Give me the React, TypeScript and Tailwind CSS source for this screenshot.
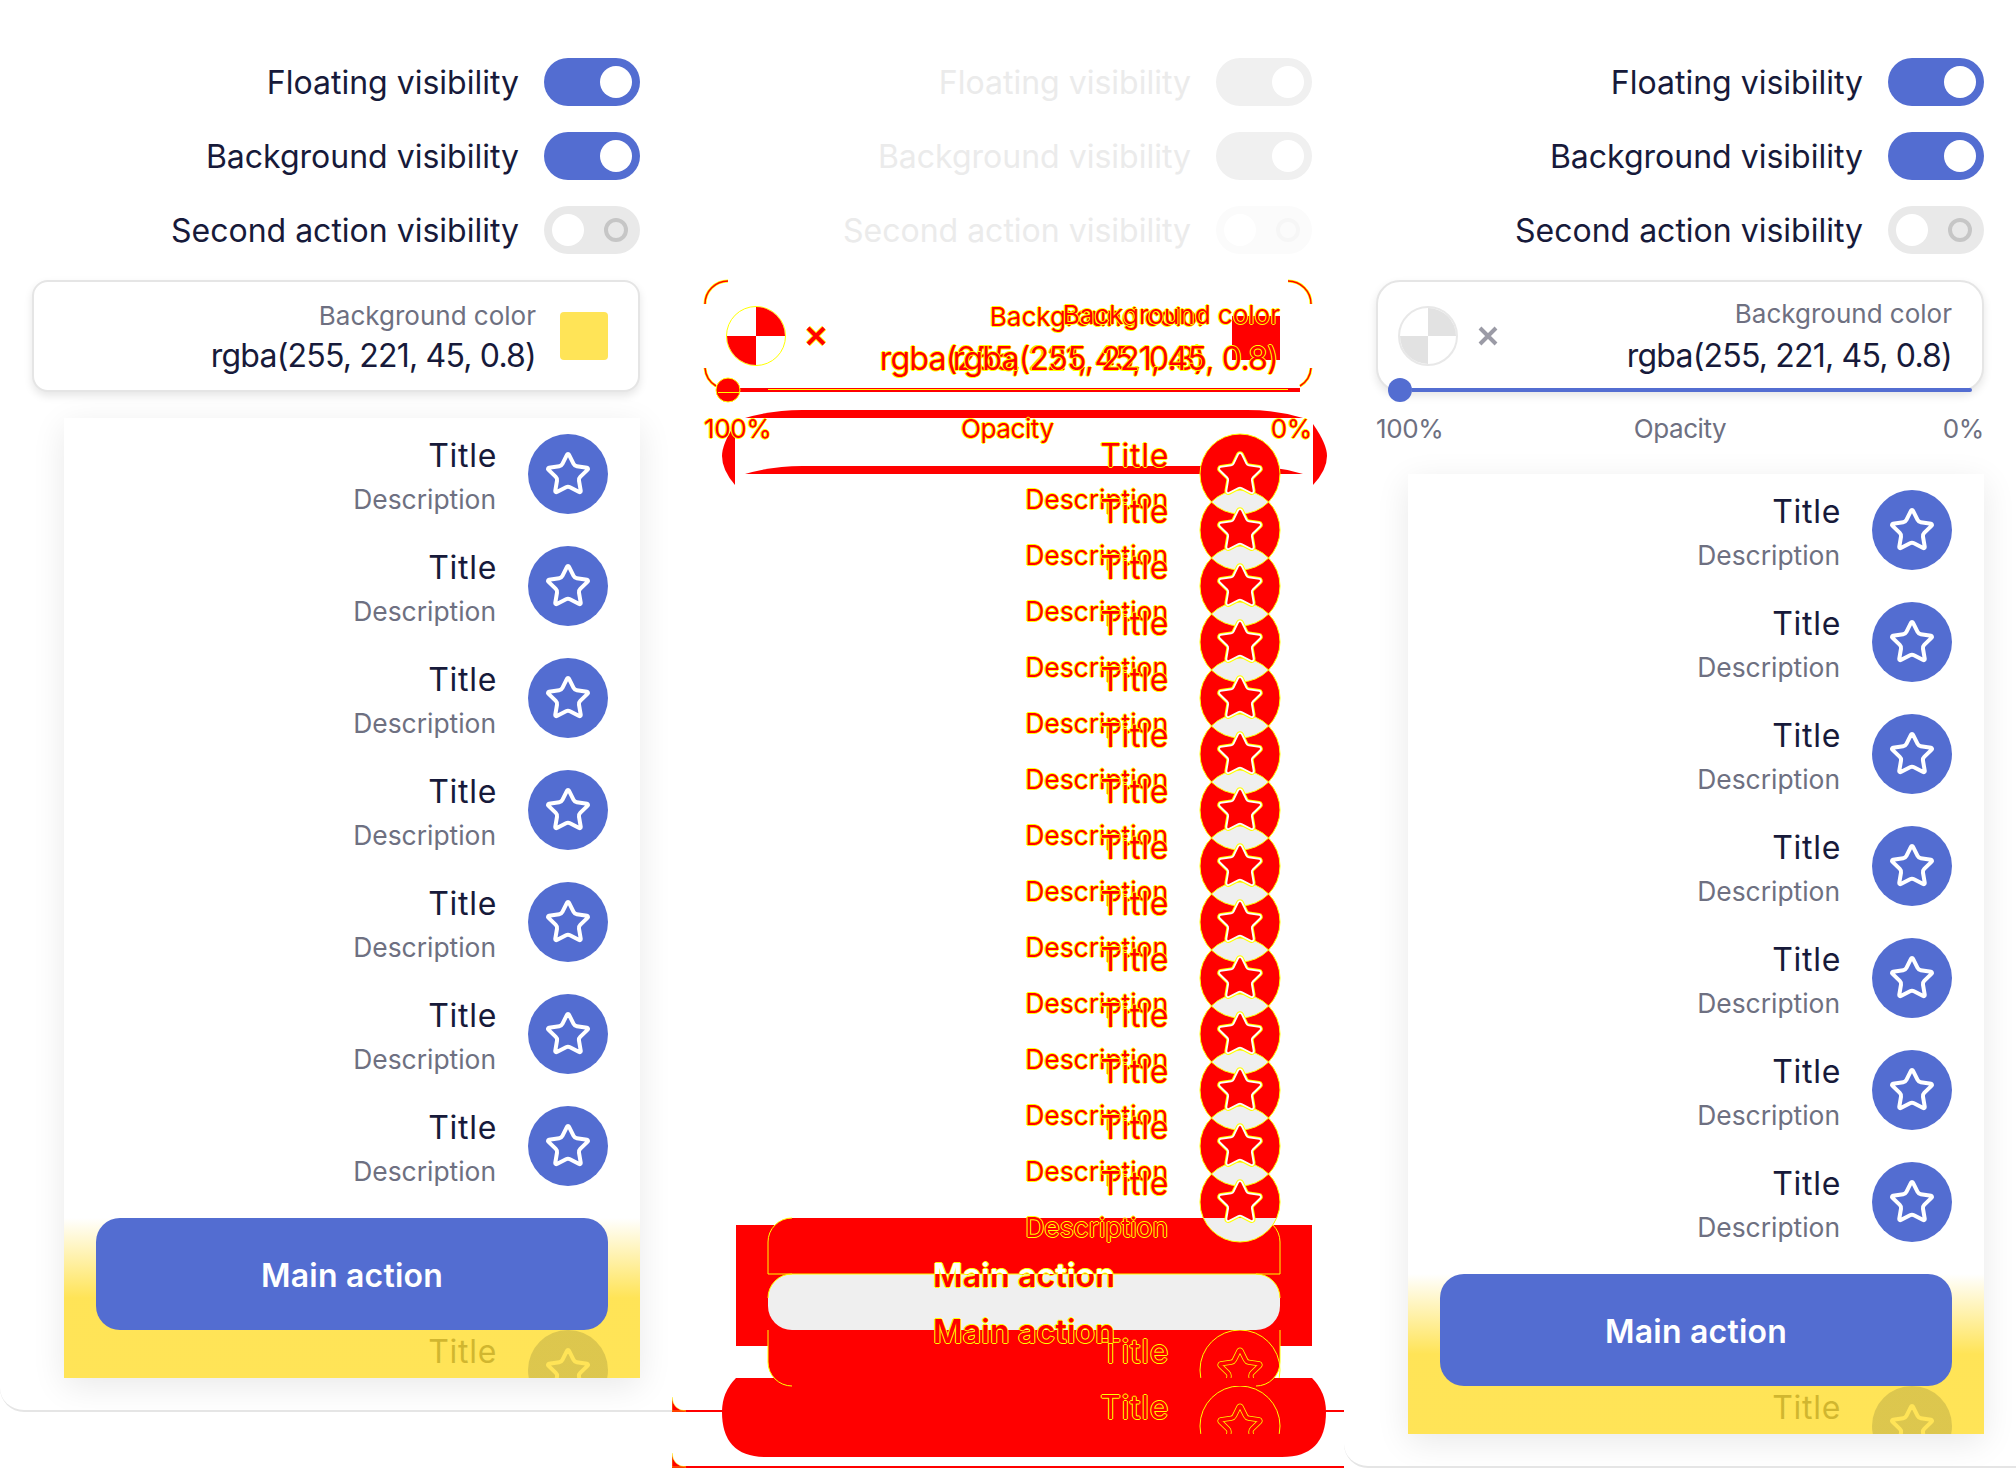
import { Star } from 'lucide-react'

const starPath =
  'M11.525 2.295a.53.53 0 0 1 .95 0l2.31 4.679a2.123 2.123 0 0 0 1.595 1.16l5.166.756a.53.53 0 0 1 .294.904l-3.736 3.638a2.123 2.123 0 0 0-.611 1.878l.882 5.14a.53.53 0 0 1-.771.56l-4.618-2.428a2.122 2.122 0 0 0-1.973 0L6.396 21.01a.53.53 0 0 1-.77-.56l.881-5.139a2.122 2.122 0 0 0-.611-1.879L2.16 9.795a.53.53 0 0 1 .294-.906l5.165-.755a2.122 2.122 0 0 0 1.597-1.16z'

const toggles = [
  { label: 'Floating visibility', on: true },
  { label: 'Background visibility', on: true },
  { label: 'Second action visibility', on: false },
]

const outline = '[text-shadow:1px_0_#ffff00,-1px_0_#ffff00,0_1px_#ffff00,0_-1px_#ffff00]'
const diffText = `absolute text-[#ff0000] whitespace-nowrap ${outline}`

function Toggle({ on, faint }: { on: boolean; faint?: boolean }) {
  const track = faint ? (on ? 'bg-[#f0f0f0]' : 'bg-[#fbfbfb]') : on ? 'bg-[#536dd1]' : 'bg-[#e9e9e9]'
  return (
    <div className={`relative w-24 h-12 rounded-full flex items-center ${on ? 'justify-end pr-2' : 'justify-between pl-2 pr-3'} ${track}`}>
      <div className="w-8 h-8 rounded-full bg-white" />
      {!on && <div className={`w-6 h-6 rounded-full border-4 ${faint ? 'border-[#f6f6f6]' : 'border-[#c6c6c6]'}`} />}
    </div>
  )
}

function ToggleList({ faint }: { faint?: boolean }) {
  return (
    <div className="flex flex-col gap-[26px]">
      {toggles.map((t) => (
        <div key={t.label} className="flex items-center justify-end gap-[25px] h-12">
          <span className={`text-[32px] pt-[2px] ${faint ? 'text-[#ebebeb]' : 'text-[#171a3a]'}`}>{t.label}</span>
          <Toggle on={t.on} faint={faint} />
        </div>
      ))}
    </div>
  )
}

function ColorText({ lifted }: { lifted?: boolean }) {
  return (
    <div className="flex flex-col items-end pt-1">
      <span className={`text-[26px] leading-[36px] text-[#6e7081] ${lifted ? '-mt-[2px] pb-[2px]' : ''}`}>Background color</span>
      <span className="text-[32px] leading-[44px] tracking-[-0.8px] text-[#171a3a]">rgba(255, 221, 45, 0.8)</span>
    </div>
  )
}

function ListRow() {
  return (
    <div className="flex items-start justify-end gap-8 h-20 shrink-0">
      <div className="flex flex-col items-end h-20">
        <span className="text-[32px] leading-[44px] tracking-[0.7px] -mr-px text-[#171a3a]">Title</span>
        <span className="text-[26.4px] leading-[42px] text-[#6e7081]">Description</span>
      </div>
      <div className="w-20 h-20 rounded-full bg-[#536dd1] flex items-center justify-center">
        <Star size={48} className="text-white" strokeWidth={2} />
      </div>
    </div>
  )
}

function Panel({ className }: { className: string }) {
  return (
    <div className={`relative ml-8 h-[960px] bg-white overflow-hidden shadow-[0_8px_32px_rgba(0,0,0,0.09)] ${className}`}>
      <div className="flex flex-col gap-8 pt-4 pr-8">
        {Array.from({ length: 9 }).map((_, i) => (
          <ListRow key={i} />
        ))}
      </div>
      <div className="absolute inset-x-0 bottom-0 px-8 pb-12 bg-[linear-gradient(to_bottom,rgba(255,221,45,0)_0%,rgba(255,221,45,0.8)_50%)]">
        <button className="w-full h-28 pt-1 rounded-3xl bg-[#536dd1] text-white text-[32px] font-semibold tracking-[0.2px]">Main action</button>
      </div>
    </div>
  )
}

function ResetIcon() {
  return (
    <svg width="60" height="60" viewBox="0 0 60 60">
      <circle cx="30" cy="30" r="29" fill="#fff" stroke="#e8e8e8" strokeWidth="2" />
      <path d="M30 2a28 28 0 0 1 28 28H30z" fill="#e2e2e2" />
      <path d="M30 58a28 28 0 0 1-28-28h28z" fill="#e2e2e2" />
    </svg>
  )
}

function LeftColumn() {
  return (
    <div className="w-[672px] h-[1412px] shrink-0 bg-white overflow-hidden rounded-bl-3xl border-b-2 border-[#e5e5e5] pt-[58px] pl-8 pr-8">
      <ToggleList />
      <div className="mt-[26px] h-[112px] rounded-2xl border-2 border-[#e5e5e5] bg-white shadow-[0_4px_8px_rgba(0,0,0,0.1)] flex items-center justify-end gap-6 pr-[30px]">
        <ColorText />
        <div className="w-12 h-12 rounded bg-[#ffe457]" />
      </div>
      <Panel className="mt-[26px]" />
    </div>
  )
}

function RightColumn() {
  return (
    <div className="w-[672px] h-[1468px] shrink-0 bg-white overflow-hidden rounded-bl-3xl border-b-2 border-[#e5e5e5] pt-[58px] pl-8 pr-8">
      <ToggleList />
      <div className="relative mt-[26px] h-[112px] rounded-3xl border-2 border-[#e5e5e5] bg-white shadow-[0_4px_8px_rgba(0,0,0,0.1)] flex items-center pl-[20px] pr-[30px]">
        <ResetIcon />
        <svg width="20" height="20" viewBox="0 0 20 20" className="ml-5">
          <path d="M2 2l16 16M18 2L2 18" stroke="#9b9ba6" strokeWidth="4" />
        </svg>
        <div className="ml-auto">
          <ColorText lifted />
        </div>
        {/* opacity slider sits on the card's bottom edge */}
        <div className="absolute left-[10px] right-[10px] -bottom-3 h-6 flex items-center">
          <div className="w-6 h-6 rounded-full bg-[#536dd1] shrink-0" />
          <div className="flex-1 h-1 rounded-r-full bg-[#536dd1]" />
        </div>
      </div>
      <div className="mt-[18px] grid grid-cols-3 text-[26px] leading-[38px] tracking-[-0.4px] text-[#6e7081]">
        <span>100%</span>
        <span className="text-center">Opacity</span>
        <span className="text-right">0%</span>
      </div>
      <Panel className="mt-[26px]" />
    </div>
  )
}

// top of each row in the overlaid diff: left layout and right layout alternate
const diffRows = Array.from({ length: 14 }).map((_, i) => 434 + i * 56)

function DiffStar({ y, hollow }: { y: number; hollow?: boolean }) {
  return (
    <g transform={`translate(544 ${y + 16}) scale(2)`} fill="none" strokeLinejoin="round">
      <path d={starPath} stroke="#ffff00" strokeWidth={hollow ? 2.6 : 2.8} />
      <path d={starPath} stroke={hollow ? '#ff0000' : '#ffffff'} strokeWidth={1.8} />
      {!hollow && <path d={starPath} fill="#ff0000" />}
    </g>
  )
}

function DiffCanvas() {
  return (
    <svg width="672" height="1468" viewBox="0 0 672 1468" className="absolute left-0 top-0">
      <defs>
        <clipPath id="band">
          <rect x="0" y="1218" width="672" height="160" />
        </clipPath>
        <clipPath id="lastA">
          <rect x="0" y="1330" width="672" height="48" />
        </clipPath>
        <clipPath id="lastB">
          <rect x="0" y="1386" width="672" height="48" />
        </clipPath>
        {diffRows.map((y) => (
          <clipPath id={`row-${y}`} key={y}>
            <circle cx="568" cy={y + 40} r="40" />
          </clipPath>
        ))}
      </defs>

      {/* shadow differences round the top of the panel */}
      <g fill="#ff0000">
        <path d="M73 418Q100 410 130 410H575Q605 410 631 418Z" />
        <path d="M73 474Q100 466 130 466H575Q605 466 631 474Z" />
        <path d="M63 424Q50 444 50 456Q50 470 63 485Z" />
        <path d="M641 424Q655 444 655 456Q655 470 641 485Z" />
      </g>

      {/* yellow footer and shadow below the panel */}
      <rect x="64" y="1225" width="576" height="121" fill="#ff0000" />
      <path d="M64 1378H640Q654 1392 654 1412Q654 1457 610 1457H94Q50 1457 50 1412Q50 1392 64 1378Z" fill="#ff0000" />
      <rect x="96" y="1218" width="512" height="168" rx="24" fill="#ff0000" />
      <rect x="96" y="1274" width="512" height="56" rx="24" fill="#efefef" />
      <path
        d="M96 1274V1242A24 24 0 0 1 120 1218M608 1274V1242A24 24 0 0 0 584 1218M96 1274H608M96 1330V1362A24 24 0 0 0 120 1386M608 1330V1362A24 24 0 0 1 584 1386M96 1298A24 24 0 0 1 120 1274M608 1298A24 24 0 0 0 584 1274"
        fill="none"
        stroke="#ffff00"
      />

      {/* box bottoms */}
      <path d="M0 1411H672M0 1467H672" stroke="#ff0000" strokeWidth="2" />
      <path d="M0 1397Q1 1410 14 1411H0Z" fill="#ff0000" stroke="#ffff00" strokeWidth="0.5" />
      <path d="M0 1453Q1 1466 14 1467H0Z" fill="#ff0000" stroke="#ffff00" strokeWidth="0.5" />

      {/* overlapping avatars: only the lens both layouts share stays grey */}
      {diffRows.map((y) => (
        <circle key={y} cx="568" cy={y + 40} r="40" fill="#ff0000" />
      ))}
      {diffRows.slice(1).map((y) => (
        <circle key={y} cx="568" cy={y + 40} r="40" fill="#efefef" clipPath={`url(#row-${y - 56})`} />
      ))}
      <circle cx="568" cy="1202" r="40" fill="#efefef" clipPath="url(#band)" />
      {diffRows.map((y) => (
        <circle key={y} cx="568" cy={y + 40} r="40" fill="none" stroke="#ffff00" />
      ))}
      {diffRows.map((y) => (
        <DiffStar key={y} y={y} />
      ))}

      {/* rows hidden by the footer */}
      <g clipPath="url(#lastA)">
        <circle cx="568" cy="1370" r="40" fill="none" stroke="#ffff00" />
        <DiffStar y={1330} hollow />
      </g>
      <g clipPath="url(#lastB)">
        <circle cx="568" cy="1426" r="40" fill="none" stroke="#ffff00" />
        <DiffStar y={1386} hollow />
      </g>

      {/* card corners */}
      <g fill="none">
        <path d="M33 304A23 23 0 0 1 56 281M639 304A23 23 0 0 0 616 281M33 368A23 23 0 0 0 44 386M639 368A23 23 0 0 1 628 386" stroke="#ffff00" strokeWidth="3" />
        <path d="M33 304A23 23 0 0 1 56 281M639 304A23 23 0 0 0 616 281M33 368A23 23 0 0 0 44 386M639 368A23 23 0 0 1 628 386" stroke="#ff0000" strokeWidth="1.5" />
      </g>

      {/* reset icon and its clear cross */}
      <circle cx="84" cy="336" r="29.5" fill="#fff" stroke="#ffff00" />
      <path d="M84 307a29 29 0 0 1 29 29H84zM84 365a29 29 0 0 1-29-29h29z" fill="#ff0000" />
      <path d="M136 328l16 16M152 328l-16 16" stroke="#ffff00" strokeWidth="6" />
      <path d="M136 328l16 16M152 328l-16 16" stroke="#ff0000" strokeWidth="4" />

      {/* colour swatch */}
      <rect x="560" y="316" width="48" height="44" fill="#ff0000" />

      {/* slider */}
      <rect x="68" y="388" width="560" height="4" fill="#ff0000" />
      <rect x="96" y="389" width="520" height="1" fill="#ffff00" />
      <circle cx="56" cy="390" r="12" fill="#ff0000" stroke="#ffff00" />
      <rect x="46" y="392" width="22" height="1" fill="#ffff00" />
    </svg>
  )
}

function MiddleColumn() {
  return (
    <div className="relative w-[672px] h-[1468px] shrink-0 bg-white overflow-hidden pt-[58px] pl-8 pr-8">
      <ToggleList faint />
      <DiffCanvas />

      <span className={`${diffText} right-[137px] top-[299px] text-[26px] leading-[36px]`}>Background color</span>
      <span className={`${diffText} right-[64px] top-[297px] text-[26px] leading-[36px]`}>Background color</span>
      <span className={`${diffText} right-[139px] top-[337px] text-[32px] leading-[44px] tracking-[-0.8px]`}>rgba(255, 221, 45, 0.8)</span>
      <span className={`${diffText} right-[66px] top-[337px] text-[32px] leading-[44px] tracking-[-0.8px]`}>rgba(255, 221, 45, 0.8)</span>

      <span className={`${diffText} left-8 top-[410px] text-[26px] leading-[38px] tracking-[-0.4px]`}>100%</span>
      <span className={`${diffText} left-[289px] top-[410px] text-[26px] leading-[38px] tracking-[-0.4px]`}>Opacity</span>
      <span className={`${diffText} right-8 top-[410px] text-[26px] leading-[38px] tracking-[-0.4px]`}>0%</span>

      {diffRows.map((y) => (
        <div key={y}>
          <span className={`${diffText} right-[175px] text-[32px] leading-[44px] tracking-[0.7px]`} style={{ top: y }}>
            Title
          </span>
          <span className={`${diffText} right-[176px] text-[26.4px] leading-[42px]`} style={{ top: y + 44 }}>
            Description
          </span>
        </div>
      ))}
      <span className={`${diffText} right-[175px] top-[1330px] text-[32px] leading-[44px] tracking-[0.7px]`}>Title</span>
      <span className={`${diffText} right-[175px] top-[1386px] text-[32px] leading-[44px] tracking-[0.7px]`}>Title</span>

      {/* first layout's label is white on the red half, red on the grey half */}
      <div className="absolute left-24 w-[512px] top-[1240px] h-[34px] overflow-hidden text-center">
        <span className={`text-white text-[32px] font-semibold tracking-[0.2px] leading-[72px] ${outline}`}>Main action</span>
      </div>
      <div className="absolute left-24 w-[512px] top-[1274px] h-9 overflow-hidden text-center">
        <span className={`block -mt-[34px] text-[#ff0000] text-[32px] font-semibold tracking-[0.2px] leading-[72px] ${outline}`}>Main action</span>
      </div>
      <div className="absolute left-24 w-[512px] top-[1296px] text-center">
        <span className={`text-[#ff0000] text-[32px] font-semibold tracking-[0.2px] leading-[72px] ${outline}`}>Main action</span>
      </div>
    </div>
  )
}

export default function App() {
  return (
    <div className="flex items-start w-[2016px] h-[1468px] overflow-hidden bg-white font-['Inter',sans-serif]">
      <LeftColumn />
      <MiddleColumn />
      <RightColumn />
    </div>
  )
}
